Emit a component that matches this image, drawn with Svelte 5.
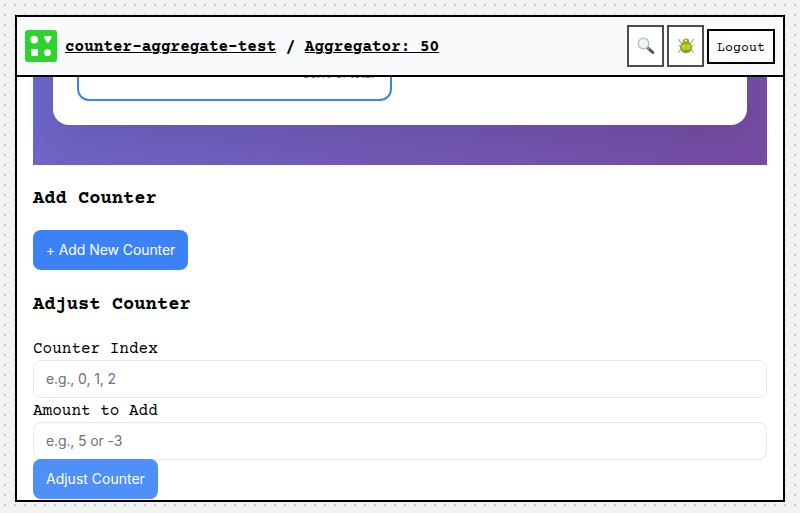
<script>
  const fields = [
    { label: 'Counter Index', hint: 'e.g., 0, 1, 2' },
    { label: 'Amount to Add', hint: 'e.g., 5 or -3' },
  ];
</script>

<div class="page">
  <div class="window">
    <header>
      <svg class="logo" viewBox="0 0 32 32">
        <rect width="32" height="32" rx="3" fill="#2fd32f" />
        <g fill="#fff">
          <circle cx="9.2" cy="9.6" r="3.9" />
          <path d="M20 6h5.600q1.400 0 .9 1.400l-2.500 4.800q-1.200 1.500-2.300 0L19 7.400Q18.600 6 20 6z" />
          <rect x="6" y="19" width="7" height="7" rx="1.3" />
          <circle cx="22.500" cy="22.700" r="3.400" />
        </g>
      </svg>
      <nav><a href="#project">counter-aggregate-test</a><span>&nbsp;/&nbsp;</span><a href="#view">Aggregator: 50</a></nav>
      <div class="tools">
        <button class="tool" aria-label="Search">
          <svg width="18" height="18" viewBox="0 0 18 18">
            <path d="M10.700 10.800l5.100 4.700" stroke="#555" stroke-width="3" stroke-linecap="round" />
            <path d="M10.300 10.400l2 1.800" stroke="#999" stroke-width="1.500" />
            <circle cx="6.500" cy="6.500" r="5.300" fill="#edf3f5" stroke="#b4b9bb" stroke-width="1.200" />
            <path d="M3.200 5.600a4 4 0 0 1 3-2.500" stroke="#fff" fill="none" />
          </svg>
        </button>
        <button class="tool" aria-label="Debug">
          <svg width="18" height="18" viewBox="0 0 18 18">
            <path d="M5.500 6.500L3 5 1.500 2M12.500 6.500L15 5l1.500-3M5 9H1.500M13 9h3.500M5 12l-2 1-1.500 3M13 12l2 1 1.500 3" fill="none" stroke="#8aa878" stroke-width="1" />
            <ellipse cx="9" cy="4.200" rx="3.200" ry="2.700" fill="#a4a51e" />
            <ellipse cx="9" cy="10.200" rx="5.900" ry="6" fill="#72a631" />
            <path d="M4 8.500Q9 3 14 8.500L12 13H6z" fill="#d9cc22" />
            <path d="M4.500 8q4.500-3 9 0M9 7v8.500" fill="none" stroke="#7b9a1e" stroke-width=".7" />
            <circle cx="8.700" cy="3.800" r="1.300" fill="#f2e545" />
          </svg>
        </button>
        <button class="logout">Logout</button>
      </div>
    </header>

    <main>
      <section class="hero">
        <div class="card">
          <div class="counter"><span>50.% of total</span></div>
        </div>
      </section>
      <h3>Add Counter</h3>
      <button class="primary add">+ Add New Counter</button>
      <h3 class="adjust">Adjust Counter</h3>
      <form>
        {#each fields as field}
          <label>{field.label}<input placeholder={field.hint} /></label>
        {/each}
        <button type="button" class="primary hovered">Adjust Counter</button>
      </form>
    </main>
  </div>
</div>

<style>
  * { box-sizing: border-box; }
  :global(body) { margin: 0; overflow: hidden; }
  .page {
    height: 513px;
    padding: 15px 15px 11px;
    background: #f2f2f2 url("data:image/svg+xml,%3Csvg xmlns='http://www.w3.org/2000/svg' width='10' height='10'%3E%3Crect x='4' y='4' width='2' height='2' fill='%23ccc'/%3E%3C/svg%3E");
    font: 16px/18px "Courier Prime", "Courier New", "Liberation Mono", monospace;
    color: #000;
  }
  .window {
    display: flex;
    flex-direction: column;
    height: 487px;
    border: 2px solid #000;
    background: #fff;
    overflow: hidden;
  }
  header {
    display: flex;
    flex: none;
    align-items: center;
    height: 60px;
    padding: 0 8px;
    border-bottom: 2px solid #000;
    background: #f9fafc;
  }
  .logo { width: 32px; height: 32px; margin-right: 8px; }
  nav { padding-top: 2px; font-weight: bold; white-space: nowrap; }
  a { color: #000; text-underline-offset: 1px; text-decoration-thickness: 1px; }
  button { font: inherit; }
  .tools { display: flex; align-items: center; gap: 3px; margin-left: auto; }
  .tool {
    display: flex;
    align-items: center;
    justify-content: center;
    width: 37px;
    height: 42px;
    padding: 0;
    border: 2px solid #4d4d4d;
    background: #fff;
  }
  .logout {
    width: 68px;
    height: 35px;
    padding: 5px 0 0;
    border: 2px solid #000;
    background: #fff;
    color: #000;
    font-size: 13.333px;
  }
  main { flex: 1; min-height: 0; padding: 0 16px; overflow: hidden; }
  .hero {
    display: flex;
    flex-direction: column;
    height: 740px;
    margin-top: -652px;
    padding: 20px 20px 40px;
    background: linear-gradient(135deg, #667eea 0%, #764ba2 100%);
  }
  .card {
    display: flex;
    flex: 1;
    align-items: flex-end;
    padding: 24px;
    border-radius: 16px;
    background: #fff;
    box-shadow: 0 10px 40px rgba(0, 0, 0, .1);
  }
  .counter {
    display: flex;
    align-items: flex-end;
    justify-content: flex-end;
    width: 315px;
    height: 140px;
    padding: 0 16px 18px;
    border: 2px solid #3b82f6;
    border-radius: 12px;
    color: #6b7280;
    font: 12px/15px Inter, sans-serif;
    letter-spacing: -.1px;
  }
  h3 { margin: 0; padding-top: 23px; font-size: 18.8px; line-height: 21px; }
  .adjust { padding-top: 22px; }
  .primary {
    display: block;
    height: 40px;
    margin: 21px 0 2px;
    padding: 0 13px;
    border: 0;
    border-radius: 8px;
    background: #3b82f6;
    color: #fff;
    font: 14px/20px Inter, sans-serif;
    white-space: nowrap;
  }
  .add { width: 155px; padding: 0 12.5px; letter-spacing: -.08px; }
  form { margin-top: 24px; }
  label { display: block; height: 62px; line-height: 20px; }
  input {
    display: block;
    width: 100%;
    height: 38px;
    margin-top: 1px;
    padding: 0 12px 2px;
    border: 1px solid #e5e7eb;
    border-radius: 8px;
    background: #fff;
    font: 14px Inter, sans-serif;
    letter-spacing: -.12px;
  }
  input::placeholder { color: #6b7280; opacity: 1; }
  .hovered { position: relative; margin: -4px 0 0; background: #4f8ff8; }
</style>
